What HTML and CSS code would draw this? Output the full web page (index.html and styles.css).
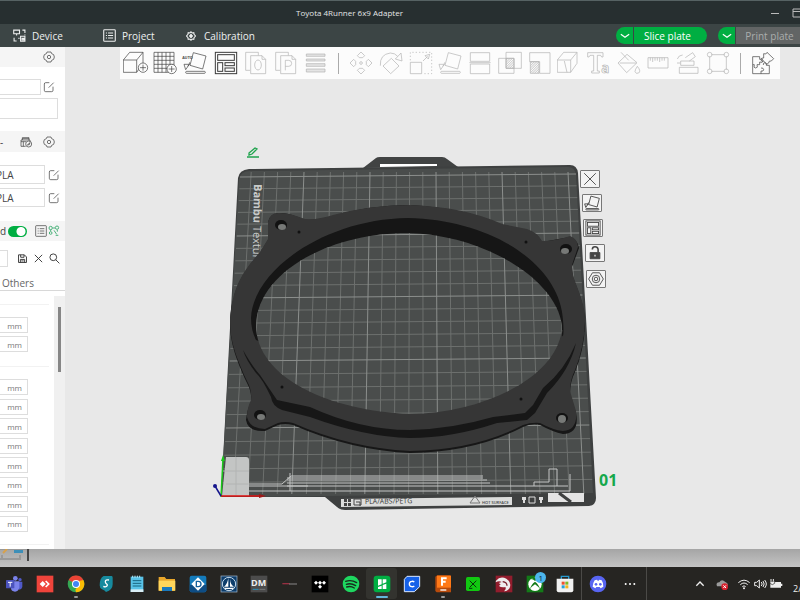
FILE: index.html
```html
<!DOCTYPE html>
<html lang="en">
<head>
<meta charset="utf-8">
<title>Toyota 4Runner 6x9 Adapter</title>
<link rel="stylesheet" href="styles.css">
</head>
<body>
<svg class="defs" aria-hidden="true">
  <symbol id="gear" viewBox="0 0 36 36"><path d="M12 3h12l2 5 6 3 2 7-2 7-6 3-2 5H12l-2-5-6-3-2-7 2-7 6-3z"/><circle cx="18" cy="18" r="5"/></symbol>
  <symbol id="edit" viewBox="0 0 36 36"><path d="M19 5H8q-4 0-4 4v19q0 4 4 4h18q4 0 4-4V17M17 20L32 5"/></symbol>
  <symbol id="cube" viewBox="0 0 72 72"><path d="M1 27h40v37H1zM1 27L20 4h40L41 27M60 4v33L41 64"/></symbol>
  <symbol id="list" viewBox="0 0 36 36"><rect x="2" y="2" width="32" height="32" rx="2"/><path d="M8 11h3M14 11h14M8 18h3M14 18h14M8 25h3M14 25h14"/></symbol>
  <symbol id="arrange" viewBox="0 0 72 72"><rect x="4" y="4" width="64" height="64"/><rect x="11" y="11" width="50" height="17"/><rect x="11" y="35" width="15" height="26"/><rect x="33" y="35" width="28" height="9"/><rect x="33" y="51" width="28" height="10"/></symbol>
  <symbol id="flat" viewBox="0 0 72 72"><path d="M31 5l38 10-10 39-38-11zM3 40h16L8 56zM14 46q6-6 6-12"/><rect x="8" y="61" width="59" height="6" rx="3"/></symbol>
  <symbol id="down" viewBox="0 0 24 24"><path d="M2 8l10 7 10-7"/></symbol>
  <pattern id="hatch" width="5" height="5" patternUnits="userSpaceOnUse" patternTransform="rotate(45)"><path d="M1 0v5" stroke="#b8b8b8" stroke-width="2"/></pattern>
</svg>
<div class="app">
  <header class="titlebar">
    <h1>Toyota 4Runner 6x9 Adapter</h1>
    <div class="window-buttons">
      <button aria-label="Minimize"><svg viewBox="0 0 10 10"><path d="M1 5.500h8"/></svg></button>
      <button aria-label="Maximize"><svg viewBox="0 0 10 10"><path d="M1 1h9v8H1zM1 3.500h9"/></svg></button>
    </div>
  </header>

  <nav class="nav">
    <a class="nav-device" href="#device"><svg viewBox="0 0 36 36"><path d="M2 3h16v10H2zM10 13v5M26 3h7v8M3 24v9h7M21 20h12v14H21zM25 26h5v4h-5zM15 26h3M33 15v2"/></svg>Device</a>
    <a class="nav-project" href="#project"><svg><use href="#list"/></svg>Project</a>
    <a class="nav-calibration" href="#calibration"><svg viewBox="0 0 36 36"><path d="M18 3l4 4 6-1 1 6 5 6-5 6-1 6-6-1-4 4-4-4-6 1-1-6-5-6 5-6 1-6 6 1z" stroke-width="4"/><path d="M18 11l6 7-6 7-6-7z" fill="currentColor"/></svg>Calibration</a>
    <div class="nav-actions">
      <div class="split"><button class="split-arrow" aria-label="Slice options"><svg><use href="#down"/></svg></button><button class="slice">Slice plate</button></div>
      <div class="split"><button class="split-arrow" aria-label="Print options"><svg><use href="#down"/></svg></button><button class="print" disabled>Print plate</button></div>
    </div>
  </nav>

  <main class="main">
    <aside class="sidebar">
      <div class="strip strip-printer"><button class="icon" aria-label="Printer settings"><svg><use href="#gear"/></svg></button></div>
      <div class="printer">
        <div class="printer-row"><input class="printer-name" aria-label="Printer"><button class="icon" aria-label="Edit printer"><svg><use href="#edit"/></svg></button></div>
        <input class="bed-type" aria-label="Bed type">
      </div>
      <div class="strip strip-filament">
        <span class="dash">-</span>
        <button class="icon" aria-label="Sync filament"><svg viewBox="0 0 36 36"><path d="M17 31H3V12h27v4M3 17h15M7 12V5h20v7M7 8h20M10 17v14"/><circle cx="26" cy="24" r="9"/><path d="M22 27l8-7-2 6z"/></svg></button>
        <button class="icon" aria-label="Filament settings"><svg><use href="#gear"/></svg></button>
      </div>
      <div class="filaments">
        <div class="filament"><select aria-label="Filament 1"><option>PLA</option></select><button class="icon" aria-label="Edit filament 1"><svg><use href="#edit"/></svg></button></div>
        <div class="filament"><select aria-label="Filament 2"><option>PLA</option></select><button class="icon" aria-label="Edit filament 2"><svg><use href="#edit"/></svg></button></div>
      </div>
      <div class="strip strip-process">
        <label class="advanced">d<input type="checkbox" checked></label>
        <button class="icon" aria-label="Parameter list"><svg><use href="#list"/></svg></button>
        <button class="icon tree" aria-label="Compare presets"><svg viewBox="0 0 36 36"><circle cx="8" cy="9" r="5"/><circle cx="27" cy="8" r="5"/><circle cx="8" cy="24" r="4"/><path d="M14 9h7M18 16l8 12M28 20v-5M23 31h8M8 14v5"/></svg></button>
      </div>
      <div class="preset">
        <input aria-label="Preset">
        <button class="icon" aria-label="Save preset"><svg viewBox="0 0 36 36"><path d="M5 6h19l7 7v18H5zM12 6v8h11V6M11 31V21h14v10M14 26h8"/></svg></button>
        <button class="icon" aria-label="Discard"><svg viewBox="0 0 36 36"><path d="M6 6l24 24M30 6L6 30"/></svg></button>
        <button class="icon" aria-label="Search"><svg viewBox="0 0 36 36"><circle cx="14" cy="14" r="11"/><path d="M22 22l12 12"/></svg></button>
      </div>
      <a class="tab" href="#others">Others</a>
      <div class="settings">
        <div class="params">
          <div class="group group-first">
            <label class="param"><input aria-label="Value 1">mm</label>
            <label class="param"><input aria-label="Value 2">mm</label>
          </div>
          <div class="group group-rest">
            <label class="param"><input aria-label="Value 3">mm</label>
            <label class="param"><input aria-label="Value 4">mm</label>
            <label class="param"><input aria-label="Value 5">mm</label>
            <label class="param"><input aria-label="Value 6">mm</label>
            <label class="param"><input aria-label="Value 7">mm</label>
            <label class="param"><input aria-label="Value 8">mm</label>
            <label class="param"><input aria-label="Value 9">mm</label>
            <label class="param"><input aria-label="Value 10">mm</label>
          </div>
        </div>
        <div class="scrollbar"><div class="thumb"></div></div>
      </div>
    </aside>

    <section class="canvas">
      <div class="toolbar">
        <div class="tools">
          <button aria-label="Add"><svg viewBox="0 0 72 72"><use href="#cube" width="72" height="72"/><circle cx="60" cy="50" r="14" fill="#fcfcfc"/><path d="M60 41v18M51 50h18"/></svg></button>
          <button aria-label="Add plate"><svg viewBox="0 0 72 72"><path d="M3 4h60v60H3zM15 4v60M27 4v60M39 4v60M51 4v60M3 16h60M3 28h60M3 40h60M3 52h60"/><circle cx="56" cy="54" r="14" fill="#fcfcfc"/><path d="M56 45v18M47 54h18"/></svg></button>
          <button aria-label="Auto orient"><svg viewBox="0 0 72 72"><use href="#flat" width="72" height="72"/><text class="auto" x="-2" y="25">AUTO</text></svg></button>
          <button class="arrange" aria-label="Arrange"><svg><use href="#arrange"/></svg></button>
          <button class="off" aria-label="Split to objects"><svg viewBox="0 0 72 72"><path d="M18 58H5V4h38v9M20 14h34l11 11v43H20zM54 14v11h11"/><ellipse cx="42" cy="42" rx="10" ry="15"/></svg></button>
          <button class="off" aria-label="Split to parts"><svg viewBox="0 0 72 72"><path d="M18 58H5V4h38v9M20 14h34l11 11v43H20zM54 14v11h11M34 58V28h10q9 0 9 9t-9 9H34"/></svg></button>
          <button class="off" aria-label="Variable layer height"><svg viewBox="0 0 72 72"><path d="M7 9h56v7H7zM7 24h56v6H7zM7 38h56v8H7zM7 54h56v9H7z" fill="#e4e4e4"/></svg></button>
        </div>
        <span class="divider"></span>
        <div class="tools">
          <button class="off" aria-label="Move"><svg viewBox="0 0 72 72"><path d="M36 3l11 11-6 6H31l-6-6zM36 69l11-11-6-6H31l-6 6zM3 36l11-11 6 6v10l-6 6zM69 36L58 25l-6 6v10l6 6z"/><circle cx="36" cy="36" r="4"/></svg></button>
          <button class="off" aria-label="Rotate"><svg viewBox="0 0 72 72"><path d="M37 22l23 23-25 23-23-23zM4 44Q2 10 34 6q14 0 22 10M66 6l3 24-20-6z"/></svg></button>
          <button class="off" aria-label="Scale"><svg viewBox="0 0 72 72"><path d="M4 34h34v34H4zM42 30l14-14M48 14l14-4-4 14z"/><path d="M4 28V4h64v64H42" stroke-dasharray="4 6"/></svg></button>
          <button class="off" aria-label="Lay on face"><svg><use href="#flat"/></svg></button>
          <button class="off" aria-label="Cut"><svg viewBox="0 0 72 72"><path d="M7 5h58v26H7zM7 39h58v29H7zM4 35h64"/></svg></button>
          <button class="off" aria-label="Boolean"><svg viewBox="0 0 72 72"><path d="M2 22h46v45H2zM24 4h46v48H24z"/><path d="M24 22h24v30H24z" fill="url(#hatch)"/></svg></button>
          <button class="off" aria-label="Supports"><svg viewBox="0 0 72 72"><path d="M5 5h61v62H35V32H5z"/><path d="M7 32h26v35H7z" fill="url(#hatch)"/></svg></button>
          <button class="off" aria-label="Seam"><svg viewBox="0 0 72 72"><use href="#cube" width="72" height="72"/><path d="M22 30l8 34"/></svg></button>
          <button class="off" aria-label="Text"><svg viewBox="0 0 72 72"><path d="M2 5h46v13h-4l-3-5H31v47h6v6H14v-6h6V13H9l-3 5H2z"/><text x="43" y="66" class="small-a">a</text></svg></button>
          <button class="off" aria-label="Colour painting"><svg viewBox="0 0 72 72"><path d="M30 10L3 36l26 29 31-30zM8 36h50M12 4l23 24M61 46q12 14 4 20-8 4-11-4 0-6 7-16z"/></svg></button>
          <button class="off" aria-label="Measure"><svg viewBox="0 0 72 72"><path d="M6 20h60v31H6zM13 20v9M20 20v13M27 20v9M34 20v9M41 20v13M48 20v9M55 20v9"/></svg></button>
          <button class="off" aria-label="Assembly"><svg viewBox="0 0 72 72"><path d="M10 49h56v18H10zM14 30h40v13H14zM28 20L50 5l8 12-18 13M4 24q4-12 16-12M3 36h10"/></svg></button>
          <button class="off" aria-label="Bounding box"><svg viewBox="0 0 72 72"><path d="M16 11h40M16 61h40M11 16v40M61 16v40"/><circle cx="11" cy="11" r="7"/><circle cx="61" cy="11" r="7"/><circle cx="11" cy="61" r="7"/><circle cx="61" cy="61" r="7"/></svg></button>
        </div>
        <span class="divider"></span>
        <div class="tools"><button aria-label="Assembly view"><svg viewBox="0 0 72 72"><path d="M5 17h21v8q10-4 10 4t-10 4v8h-8q4 10-4 10t-4-10H5zM5 41v27h25v-8q8 2 8-4t-8-5M30 68h25V43h-9q2-8-4-8t-5 7M38 8q8 4 10-4l20 19-7 7q-8-2-8 6l-6 4-9-10q-8 2-8-4t8-5z"/></svg></button></div>
      </div>

      <div class="scene">
        <svg class="plate" viewBox="65 79 735 470" role="img" aria-label="Build plate with adapter">
          <path d="M363 168l13-10q1-1 4-1h62q3 0 5 2l11 8z" fill="#414343"/>
          <path d="M380 164l57 0v2l-57 1z" fill="#fff"/>
          <path d="M249 169L570 165q7 0 8 8l18 325q0 7-7 8l-244 4q-5 0-8-3l-12-10-104 0 17-319q1-8 11-9z" fill="#3e4040"/>
          <path d="M250 171L568 167q7 0 8 8l17 318-372 4 18-317q1-9 11-9z" fill="#4a4d4c"/>
          <path class="grid-minor" id="grid-minor"/>
          <path class="grid-major" id="grid-major"/>
          <text class="brand" transform="translate(254 184) rotate(91)">Bambu<tspan class="brand-light"> Texture.</tspan></text>
          <path d="M226 457h20q3 0 3 3v36h-27z" fill="#c3c5c4"/>
          <path d="M226 484h23M236 457v38M223 471h26" stroke="#b2b4b3"/>
          <path d="M248 484h34l9-8h192M248 486h60M287 478h196M287 480h200M287 483h203M287 486h281M248 491h322v-17M534 486v-4h15v-13h8v17M290 473v18" fill="none" stroke="#c4c6c5"/>
          <path d="M341 499l171-2v8l-171 2z" fill="#dcdddc"/>
          <path d="M344 499h3v3h-3zM348 499h3v3h-3zM344 503h3v3h-3zM348 503h3v3h-3z" fill="#444"/>
          <path d="M354 499h7v6h-7zM356 502h4v4" fill="none" stroke="#444" stroke-width="1"/>
          <text class="plate-text" transform="translate(365 504) rotate(-1)">PLA/ABS/PETG</text>
          <path d="M470 503l5-7 5 7z" fill="none" stroke="#777"/>
          <text class="plate-small" x="482" y="504">HOT SURFACE</text>
          <path d="M522 497h4v3h-1v3h-2v-3h-1zM539 497h4v3h-1v3h-2v-3h-1z" fill="#ddd"/>
          <path d="M529 497h6v6h-6z" fill="none" stroke="#ddd"/>
          <path d="M548 493h36v9h-36z" fill="#e4e4e4"/>
          <path d="M559 493l12 9" stroke="#3e4040" stroke-width="3"/>

          <path class="ring-side" d="M230 322C232 292 240 275 260 253L268 240V222Q270 213 280 213Q290 213 305 220Q318 220 333 216Q370 205 410 205Q465 208 502 225L527 230Q537 233 542 242L570 237Q578 240 579 248L572 267Q572 276 576 285Q586 310 585 326Q584 350 575 372Q570 382 570 394L576 413Q580 433 563 434Q553 432 540 425Q532 423 523 427Q475 452 410 453Q350 450 293 425Q285 423 278 425L265 431Q248 432 246 420Q247 410 251 402Q252 392 247 383C234 355 230 340 230 322z"/>
          <path class="ring-top" d="M230 320C232 291 240 274 260 252L268 239V222Q270 212 280 213Q290 213 305 219Q318 220 333 215Q370 205 410 205Q465 207 502 224L527 229Q537 232 542 241Q556 241 570 236Q578 239 578 247L572 265Q572 275 576 284Q586 308 585 322Q584 348 575 370Q570 380 570 391L576 411Q578 430 563 431Q553 430 540 423Q532 422 523 425Q475 450 410 451Q350 448 293 423Q285 421 278 423L265 429Q250 429 247 417Q247 408 251 400Q252 390 247 381C234 353 230 338 230 320z"/>
          <path class="ring-side" d="M243 350Q252 366 260 375L277 400L310 407Q360 430 410 430Q452 429 493 417L525 413L533 405L543 388Q565 370 576 343Q570 370 547 393L535 413L527 420L497 423Q452 438 410 438Q365 437 310 417L282 410Q272 406 271 397Q262 378 256 373Q246 360 243 350z"/>
          <path class="ring-wall" d="M251 318C253 270 325 219 408 218C495 220 560 266 563 320C565 345 560 335 563 330L410 400L256 340Q251 330 251 318z"/>
          <clipPath id="opening"><path d="M256 325C257 275 325 233 408 233C490 235 562 285 562 330C555 380 480 413 410 414C330 411 256 378 256 325z"/></clipPath>
          <g clip-path="url(#opening)"><path d="M250 225h320v195H250z" fill="#4a4d4c"/><use href="#grid-minor" class="grid-minor"/><use href="#grid-major" class="grid-major"/></g>
          <g class="holes"><ellipse cx="281" cy="225" rx="6" ry="5"/><ellipse cx="566" cy="249" rx="6" ry="5"/><ellipse cx="260" cy="415" rx="6" ry="5"/><ellipse cx="562" cy="418" rx="6" ry="5"/></g>
          <g fill="#777977"><ellipse cx="282" cy="227" rx="4" ry="3"/><ellipse cx="565" cy="251" rx="4" ry="3"/><ellipse cx="261" cy="417" rx="4" ry="3"/><ellipse cx="562" cy="419" rx="4" ry="4"/></g>
          <g fill="#111"><circle cx="299" cy="232" r="1.500"/><circle cx="526" cy="242" r="1.500"/><circle cx="282" cy="387" r="1.500"/><circle cx="521" cy="399" r="1.500"/></g>

          <path d="M221 497l2-38" stroke="#19c819" stroke-width="1.500"/><path d="M221 461l2-6 2 6z" fill="#19c819"/>
          <path d="M221 496h38" stroke="#e01010" stroke-width="1.500"/><path d="M259 494l7 2-7 2z" fill="#a01818"/>
          <path d="M221 496l-6-10" stroke="#15158c" stroke-width="1.500"/><circle cx="215" cy="486" r="2" fill="#15158c"/>
          <path d="M247 157h12M249 153l6-5 2 1-5 5-3 1z" fill="none" stroke="#1fa34d" stroke-width="1.300"/>
          <text class="plate-number" x="599" y="486">01</text>
        </svg>
        <button class="plate-button remove" aria-label="Delete plate"><svg viewBox="0 0 72 72"><path d="M10 10l52 52M62 10L10 62"/></svg></button>
        <button class="plate-button orient" aria-label="Orient plate"><svg><use href="#flat"/></svg></button>
        <button class="plate-button layout" aria-label="Arrange plate"><svg><use href="#arrange"/></svg></button>
        <button class="plate-button lock" aria-label="Lock plate"><svg viewBox="0 0 72 72"><path d="M14 34h44v28H14z" fill="#444"/><path d="M24 20q0-12 12-12t14 12v14" stroke-width="7"/><path d="M36 44v8" stroke="#fff" stroke-width="5"/></svg></button>
        <button class="plate-button config" aria-label="Plate settings"><svg viewBox="0 0 72 72"><path d="M20 8h32l17 28-17 28H20L3 36z"/><circle cx="36" cy="36" r="17"/><circle cx="36" cy="36" r="8"/></svg></button>
      </div>
    </section>
  </main>

  <div class="desktop">
    <svg viewBox="0 0 30 18"><path d="M0 0h30v1H0z" fill="#999"/><path d="M3 4l4-4" stroke="#d8a14a" stroke-width="2"/><path d="M14 1h9v3h-9z" fill="#3d8fb8"/><path d="M0 10h20V6M2 6v4" stroke="#999" fill="none"/><path d="M27 0h2v12h-2z" fill="#444"/></svg>
  </div>

  <footer class="taskbar">
    <div class="apps">
      <button aria-label="Teams"><svg viewBox="0 0 54 54"><circle cx="31" cy="10" r="7" fill="#7b83eb"/><circle cx="45" cy="14" r="5" fill="#5059c9"/><path d="M40 20h12v16q-2 8-10 8z" fill="#5059c9"/><path d="M18 19h25v18q-2 13-13 13T18 40z" fill="#7b83eb"/><rect x="3" y="15" width="25" height="25" rx="2" fill="#4b53bc"/><path d="M9 22h13M15.500 22v13" stroke="#fff" stroke-width="3"/></svg></button>
      <button aria-label="AnyDesk"><svg viewBox="0 0 54 54"><path d="M2 2h50v50H2z" fill="#ef443b"/><path d="M20 18l9 9-9 9-9-9z" fill="#fff"/><path d="M29 18l9 9-9 9" fill="none" stroke="#fff" stroke-width="5"/></svg></button>
      <button class="running" aria-label="Chrome"><svg viewBox="0 0 54 54"><circle cx="27" cy="27" r="25" fill="#34a853"/><path d="M5 15A25 25 0 0 1 49 15L27 27z" fill="#ea4335"/><path d="M49 15A25 25 0 0 1 27 52l-2-8 12-17-10-12z" fill="#fbbc04"/><path d="M5 15h44L27 20z" fill="#ea4335"/><circle cx="27" cy="27" r="12" fill="#fff"/><circle cx="27" cy="27" r="9" fill="#4285f4"/></svg></button>
      <button aria-label="Surfshark"><svg viewBox="0 0 54 54"><path d="M20 3h24q3 0 3 5v20q0 17-20 23-3-5-12-8-7-3-7-12 0-22 12-28z" fill="#178a9e"/><path d="M36 15q-11-2-11 5 0 4 4 7t0 7q-4 3-10 0" fill="none" stroke="#fff" stroke-width="4"/></svg></button>
      <button aria-label="Notepad"><svg viewBox="0 0 54 54"><path d="M8 5h38v46H8z" fill="#59c3e8"/><path d="M8 43h38v8H8z" fill="#d9eef5"/><path d="M14 17h26M14 25h26M14 33h26" stroke="#17647f" stroke-width="3"/><path d="M14 2v6M21 2v6M28 2v6M35 2v6" stroke="#bdeeff" stroke-width="3"/></svg></button>
      <button aria-label="File Explorer"><svg viewBox="0 0 54 54"><path d="M2 6h18l5 6h26v35H2z" fill="#e9a72b"/><path d="M2 17h50v30H2z" fill="#ffd65b"/><path d="M12 36h30v12H12z" fill="#1979bd"/></svg></button>
      <button aria-label="Driver tool"><svg viewBox="0 0 54 54"><rect x="2" y="2" width="50" height="50" rx="6" fill="#147bbb"/><path d="M2 30h50v16q0 6-6 6H8q-6 0-6-6z" fill="#0e4d85"/><path d="M27 7l20 20-20 20L7 27z" fill="#fff"/><path d="M22 19h6q8 0 8 8t-8 8h-6z" fill="none" stroke="#14609c" stroke-width="4"/></svg></button>
      <button aria-label="Marine"><svg viewBox="0 0 54 54"><path d="M2 2h50v50H2z" fill="#a9bfd4"/><path d="M4 4h46v46H4z" fill="#0d3d6b"/><circle cx="27" cy="27" r="20" fill="none" stroke="#c4d9ea" stroke-width="3"/><path d="M25 8v27H12q10-7 13-27zM30 12q1 17 12 23H30zM11 38h32l-5 4H16z" fill="#fff"/></svg></button>
      <button aria-label="DM"><svg viewBox="0 0 54 54"><path d="M2 2h50v50H2z" fill="#4c4c4c"/><text class="app-dm" x="3" y="34">DM</text><path d="M8 43h18" stroke="#2c8db5" stroke-width="3"/><path d="M28 43h18" stroke="#777" stroke-width="3"/></svg></button>
      <button aria-label="Audio"><svg viewBox="0 0 54 54"><path d="M4 26h22" stroke="#973042" stroke-width="4"/><path d="M24 27h24" stroke="#888" stroke-width="3"/></svg></button>
      <button aria-label="Tidal"><svg viewBox="0 0 54 54"><path d="M2 2h50v50H2z" fill="#000"/><path d="M15 17l6 6-6 6-6-6zM27 17l6 6-6 6-6-6zM39 17l6 6-6 6-6-6zM27 29l6 6-6 6-6-6z" fill="#fff"/></svg></button>
      <button aria-label="Spotify"><svg viewBox="0 0 54 54"><circle cx="27" cy="27" r="25" fill="#1ed760"/><path d="M11 19q17-6 33 4M13 28q14-5 28 4M14 36q12-4 23 3" fill="none" stroke="#182b1e" stroke-width="4" stroke-linecap="round"/></svg></button>
      <button class="active" aria-label="Bambu Studio"><svg viewBox="0 0 54 54"><rect x="2" y="2" width="50" height="50" rx="9" fill="#00ae42"/><path d="M15 13h11v15l-11 4zM15 36l11-4v10H15zM29 13h11v9l-11 4zM29 30l11-4v16H29z" fill="#fff"/></svg></button>
      <button aria-label="Cura"><svg viewBox="0 0 54 54"><path d="M12 4h38v31L34 50H4V13z" fill="#1661e8" stroke="#d9e8ff" stroke-width="3"/><path d="M34 21q-4-3-8-2-7 1-7 8t7 8q4 1 8-2" fill="none" stroke="#fff" stroke-width="4"/></svg></button>
      <button class="running" aria-label="Fusion"><svg viewBox="0 0 54 54"><path d="M4 5l6-4h38l3 3v48H8l-4-4z" fill="#b84b0c"/><path d="M9 2h42v36H9z" fill="#ff7917"/><path d="M24 32V10h14M24 20h11" fill="none" stroke="#fff" stroke-width="6"/><path d="M19 45h18" stroke="#fff" stroke-width="4"/></svg></button>
      <button aria-label="Xmarks"><svg viewBox="0 0 54 54"><rect x="6" y="6" width="42" height="42" rx="5" fill="#11c811"/><path d="M17 17l20 20M37 17L17 37M15 40h10" stroke="#073807" stroke-width="3"/></svg></button>
      <button aria-label="Dragon"><svg viewBox="0 0 54 54"><path d="M2 2h50v50H2z" fill="#921d2d"/><path d="M3 17Q16 2 34 11q15 9 11 25-4 12-18 13 8-7 4-13-13 2-19-3l5-5-6-4 9-3q-8-5-18 1z" fill="#eee"/><path d="M23 20q13 2 13 12" fill="none" stroke="#77202b" stroke-width="4"/></svg></button>
      <button class="badged" aria-label="Xbox"><svg viewBox="0 0 54 54"><path d="M2 2h50v50H2z" fill="#137a18"/><circle cx="27" cy="28" r="20" fill="#fff"/><path d="M11 45q4-17 16-25 12 8 16 25-3-9-16-17-13 8-16 17zM14 12q8 0 13 6 5-6 13-6-10-7-26 0z" fill="#137a18"/></svg><span class="badge">1</span></button>
      <button aria-label="Store"><svg viewBox="0 0 54 54"><path d="M16 14V4h22v10" fill="none" stroke="#279bd0" stroke-width="4"/><path d="M2 11h50v35q0 6-6 6H8q-6 0-6-6z" fill="#f1f1f1"/><path d="M17 20h9v9h-9z" fill="#ef5230"/><path d="M28 20h9v9h-9z" fill="#7eb927"/><path d="M17 31h9v9h-9z" fill="#26a1dc"/><path d="M28 31h9v9h-9z" fill="#f5b51c"/></svg></button>
    </div>
    <span class="task-divider"></span>
    <div class="apps">
      <button aria-label="Discord"><svg viewBox="0 0 54 54"><circle cx="27" cy="27" r="25" fill="#5865f2"/><path d="M17 16l7-2 2 3h3l2-3 7 2q6 9 5 19l-8 5-3-4H22l-3 4-8-5q0-10 6-19z" fill="#fff"/><circle cx="21" cy="28" r="4" fill="#5865f2"/><circle cx="34" cy="28" r="4" fill="#5865f2"/></svg></button>
      <button aria-label="More"><svg viewBox="0 0 54 54"><g fill="#fff"><circle cx="14" cy="27" r="3"/><circle cx="27" cy="27" r="3"/><circle cx="40" cy="27" r="3"/></g></svg></button>
    </div>
    <span class="task-divider"></span>
    <div class="tray">
      <button aria-label="Hidden icons"><svg viewBox="0 0 42 42"><path d="M10 26l11-11 11 11" fill="none" stroke="#eee" stroke-width="4"/></svg></button>
      <button aria-label="OneDrive"><svg viewBox="0 0 42 42"><path d="M6 28q-5-11 7-12 7-12 18-1 9 3 7 13z" fill="#9b9b9b"/><circle cx="29" cy="29" r="10" fill="#d8232f"/><path d="M25 25l8 8M33 25l-8 8" stroke="#fff" stroke-width="3"/></svg></button>
      <div class="status">
        <button aria-label="Network"><svg viewBox="0 0 42 42"><path d="M4 17q17-15 34 0M10 23q11-10 22 0M16 29q5-5 10 0" fill="none" stroke="#eee" stroke-width="3"/><circle cx="21" cy="34" r="3" fill="#eee"/></svg></button>
        <button aria-label="Volume"><svg viewBox="0 0 42 42"><path d="M5 16h6l8-7v24l-8-7H5zM25 15q5 6 0 12M30 12q7 9 0 18M35 9q10 12 0 24" fill="none" stroke="#eee" stroke-width="3"/></svg></button>
        <button aria-label="Battery"><svg viewBox="0 0 42 42"><path d="M4 15h32v17H4zM36 20h4v7h-4z" fill="#eee"/><path d="M6 6v8M13 6v8M3 13h14v6q-7 8-14 0z" stroke="#262522" fill="#eee" stroke-width="2"/><path d="M6 6v8M13 6v8" stroke="#eee" stroke-width="3"/></svg></button>
      </div>
      <span class="clock">2/</span>
    </div>
  </footer>
</div>
<script src="script.js"></script>
</body>
</html>
```
FILE: styles.css
```css
* { box-sizing: border-box; }
body {
  margin: 0;
  font-family: "Open Sans", "Noto Sans", sans-serif;
  font-size: 10px;
  color: #444;
  overflow: hidden;
}
button, input, select { font: inherit; color: inherit; margin: 0; padding: 0; border: 0; background: none; border-radius: 0; min-width: 0; }
button { display: flex; align-items: center; justify-content: center; }
a { color: inherit; text-decoration: none; }
svg { display: block; fill: none; stroke-width: 2; }
.defs { position: absolute; width: 0; height: 0; }
.app { display: flex; flex-direction: column; height: 100vh; min-height: 600px; }

.titlebar {
  display: flex;
  height: 24px;
  flex: none;
  align-items: center;
  justify-content: center;
  position: relative;
  background: #272f30;
  border-top: 1px solid #566263;
  color: #e4e6e6;
}
.titlebar h1 { margin: 0; padding-right: 101px; font: 400 8px "Open Sans", sans-serif; }
.window-buttons { position: absolute; right: -2px; display: flex; gap: 12px; }
.window-buttons svg { width: 10px; height: 10px; stroke: #bbb; stroke-width: 1; }

.nav {
  display: flex;
  height: 23px;
  flex: none;
  align-items: center;
  padding-left: 13px;
  background: #3c4545;
  color: #eef0f0;
}
.nav a { display: flex; align-items: center; gap: 6px; }
.nav a svg { width: 13px; height: 13px; stroke: currentColor; stroke-width: 3; }
.nav-device { width: 90px; }
.nav-project { width: 83px; }
.nav .nav-calibration svg { width: 10px; height: 10px; }
.nav .nav-calibration { gap: 8px; }
.nav-actions { display: flex; gap: 11px; margin-left: auto; }
.split { display: flex; gap: 1px; height: 17px; }
.split-arrow { width: 17px; background: #00ae42; border-radius: 9px 0 0 9px; }
.split-arrow svg { width: 10px; height: 10px; stroke: #fff; stroke-width: 3; }
.slice { width: 73px; padding-right: 6px; background: #00ae42; color: #fff; border-radius: 0 9px 9px 0; }
.print { width: 64px; padding-left: 3px; background: #626565; color: #aaadad; }

.main { display: flex; flex: 1; min-height: 0; }
.sidebar { display: flex; flex-direction: column; width: 65px; background: #fff; overflow: hidden; }
.icon svg { width: 12px; height: 12px; stroke: #333; stroke-width: 2; }
.strip { display: flex; align-items: center; justify-content: flex-end; height: 20px; flex: none; background: #f5f5f5; padding-right: 10px; }
.sidebar input, .sidebar select { border: 1px solid #ddd; border-left: 0; background: #fff; }
.printer { padding: 12px 7px 12px 0; }
.printer-row { display: flex; align-items: center; gap: 2px; padding-bottom: 3px; }
.sidebar .printer-name { width: 41px; height: 16px; }
.sidebar .bed-type { display: block; width: 100%; height: 21px; }
.strip-filament { gap: 11px; height: 21px; }
.dash { margin-right: auto; }
.filaments { display: flex; flex-direction: column; gap: 4px; padding: 13px 0 14px; }
.filament { display: flex; align-items: center; gap: 3px; }
.filament select { appearance: none; width: 49px; height: 19px; margin-left: -4px; }
.strip-process { gap: 1px; padding-right: 5px; }
.advanced { display: flex; align-items: center; gap: 2px; margin-right: auto; }
.sidebar .advanced input { appearance: none; display: block; width: 19px; height: 11px; border: 0; border-radius: 6px; background: radial-gradient(circle at 13px 50%, #fff 4px, #00ae42 5px); }
.icon.tree svg { stroke: #4db37c; stroke-width: 3; }
.preset { display: flex; align-items: center; height: 34px; flex: none; gap: 5px; padding-right: 5px; }
.preset input { width: 8px; height: 17px; margin-right: auto; }
.preset .icon svg { width: 11px; height: 11px; stroke-width: 3; }
.tab { height: 16px; flex: none; padding-left: 2px; line-height: 16px; color: #666; border-bottom: 1px solid #d8d8d8; }
.settings { display: flex; flex: 1; min-height: 0; justify-content: space-between; }
.params { display: flex; flex-direction: column; width: 49px; padding: 13px 0 4px; }
.group { display: flex; flex-direction: column; justify-content: space-between; border-top: 1px solid #f2f2f2; padding: 12px 0; }
.group-first { gap: 3px; padding-bottom: 14px; }
.group-rest { flex: 1; border-bottom: 1px solid #f2f2f2; }
.param { display: flex; align-items: center; width: 28px; height: 16px; border: 1px solid #ddd; border-left: 0; padding-right: 5px; font-size: 8px; color: #777; justify-content: flex-end; }
.sidebar .param input { width: 4px; border: 0; height: 12px; }
.scrollbar { width: 11px; margin-top: 5px; padding: 11px 4px 0; background: #f0f0f0; }
.thumb { height: 65px; background: #868686; }

.canvas { display: flex; flex-direction: column; flex: 1; min-width: 0; background: #e8e8e8; }
.toolbar {
  display: grid;
  grid-template-columns: 7fr 1px 13fr 1px 26px;
  gap: 10px;
  align-items: center;
  height: 32px;
  flex: none;
  margin: 0 20px 0 55px;
  padding: 0 3px;
  background: #fcfcfc;
}
.tools { display: flex; justify-content: space-between; }
.tools svg { width: 24px; height: 24px; stroke: #3b3b3b; stroke-width: 2; overflow: visible; }
.tools .arrange svg { stroke-width: 3; }
.tools .off svg { stroke: #b0b0b0; }
.divider { height: 21px; background: #aaa; }
.auto { font: 700 11px "Open Sans", sans-serif; fill: #444; stroke: none; }
.small-a { font: 700 40px "Open Sans", sans-serif; }

.scene { position: relative; width: 735px; margin: 0 auto; flex: 1; min-height: 0; }
.plate { width: 735px; height: 470px; stroke-width: 1; }
.grid-minor { stroke: #6d706e; stroke-width: 1; }
.grid-major { stroke: #8c8f8d; stroke-width: 1; }
.ring-side { fill: #171717; }
.ring-wall { fill: #161616; }
.ring-top { fill: #363636; }
.holes { fill: #121212; }
.brand { font: 700 11px "Open Sans", sans-serif; fill: #c9cbca; }
.brand-light { font-weight: 400; }
.plate-text { font: 400 7px "Open Sans", sans-serif; fill: #333; }
.plate-small { font: 600 4px "Open Sans", sans-serif; fill: #444; }
.plate-number { font: 700 16px "Open Sans", sans-serif; fill: #16a84c; }
.plate-button { position: absolute; width: 20px; height: 18px; border: 1px solid #777; background: #f3f3f3; border-radius: 1px; }
.plate-button svg { width: 16px; height: 16px; stroke: #444; stroke-width: 4; }
.remove { left: 515px; top: 91px; }
.orient { left: 517px; top: 115px; }
.layout { left: 518px; top: 140px; }
.lock { left: 520px; top: 165px; }
.config { left: 521px; top: 191px; }

.desktop { height: 18px; flex: none; background: linear-gradient(#a5a5a5, #c4c4c4); }
.desktop svg { width: 30px; height: 18px; }

.taskbar {
  display: grid;
  grid-template-columns: 581fr 1px 64fr 1px 153fr;
  height: 33px;
  flex: none;
  margin-left: -1px;
  background: #262522;
}
.apps { display: flex; align-items: center; }
.apps button { position: relative; flex: 1; height: 31px; }
.apps svg { width: 18px; height: 18px; }
.apps .active { background: #33332f; border-radius: 3px; }
.running::after, .active::after { content: ""; position: absolute; bottom: 1px; left: 50%; width: 4px; height: 2px; margin-left: -2px; border-radius: 1px; background: #999; }
.apps .active::after { width: 12px; margin-left: -6px; background: #62b7dd; }
.badge { position: absolute; left: 16px; top: 4px; width: 11px; height: 11px; border-radius: 6px; background: #4cb6ec; color: #123; font-size: 8px; line-height: 11px; text-align: center; }
.app-dm { font: 700 27px "Open Sans", sans-serif; fill: #eee; }
.task-divider { background: #4b4a47; }
.tray { display: flex; align-items: center; justify-content: flex-end; gap: 8px; overflow: hidden; }
.tray svg { width: 14px; height: 14px; }
.status { display: flex; gap: 2px; padding-right: 2px; }
.clock { align-self: flex-end; width: 7px; padding-bottom: 5px; font-size: 9px; color: #eee; line-height: 12px; }
```
FILE: script.js
```js
// Perspective grid of the build plate: every fifth line is a major one.
const rows = [175, 234, 296, 359, 426, 494];
let minor = "";
let major = "";

for (let i = -14; i <= 10; i++) {
  const line = `M${436 + 13.2 * i} 172L${437.8 + 14.6 * i} 494`;
  if (i % 5 === 0) major += line; else minor += line;
}

for (let r = 0; r < 5; r++) {
  for (let s = 0; s < 5; s++) {
    const y = rows[r] + (rows[r + 1] - rows[r]) * s / 5;
    const shift = (y - 175) / 320;
    const line = `M${240 - 18 * shift} ${y + 2}L${576 + 17 * shift} ${y - 1}`;
    if (s === 0) major += line; else minor += line;
  }
}

document.getElementById("grid-minor").setAttribute("d", minor);
document.getElementById("grid-major").setAttribute("d", major);
```
